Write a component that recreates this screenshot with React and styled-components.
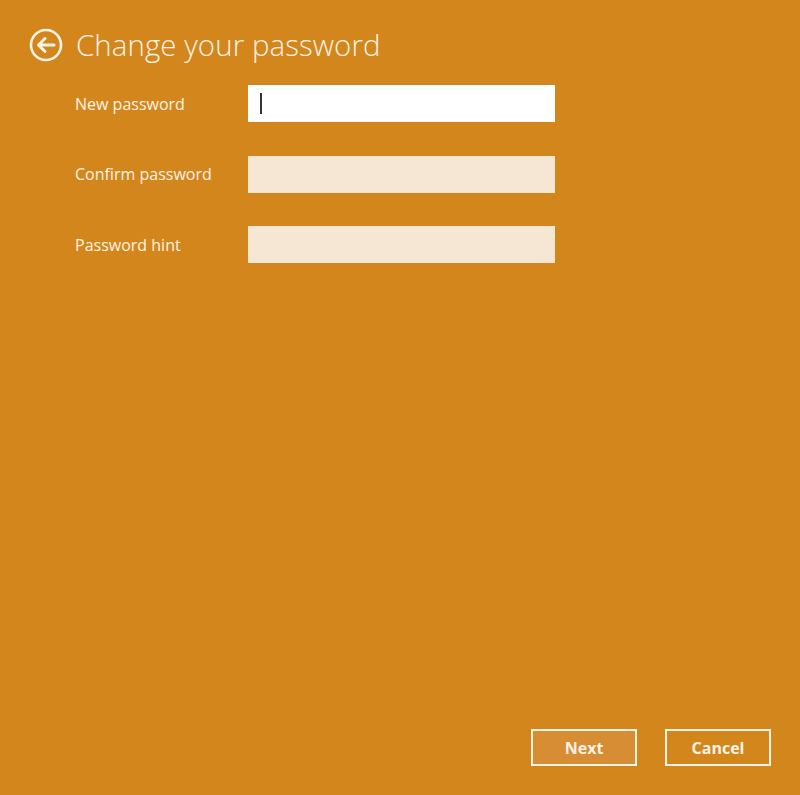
import React from "react";
import styled, { createGlobalStyle } from "styled-components";

const GlobalStyle = createGlobalStyle`
  html, body {
    margin: 0;
    padding: 0;
    background: #d3861c;
  }
  * {
    box-sizing: border-box;
  }
`;

const Page = styled.div`
  width: 800px;
  height: 795px;
  background: #d3861c;
  color: #fdf3e6;
  font-family: "Open Sans", "Noto Sans", sans-serif;
  display: flex;
  flex-direction: column;
`;

const Header = styled.div`
  display: flex;
  align-items: center;
  gap: 13px;
  padding: 27px 0 0 29px;
  height: 62px;
`;

const BackButton = styled.button`
  width: 34px;
  height: 34px;
  padding: 0;
  border: none;
  background: transparent;
  display: flex;
  align-items: center;
  justify-content: center;
`;

const Title = styled.h1`
  margin: 0;
  font-size: 29.4px;
  font-weight: 300;
  letter-spacing: 0.1px;
  color: #fdf3e6;
`;

const Form = styled.div`
  display: flex;
  flex-direction: column;
  gap: 33.5px;
  padding: 23px 0 0 75px;
`;

const Row = styled.div`
  display: flex;
  align-items: center;
`;

const Label = styled.label`
  width: 173px;
  font-size: 16px;
  color: #fdf3e6;
`;

const Field = styled.div`
  position: relative;
  width: 307px;
  height: 37px;
  background: ${(p) => (p.$active ? "#ffffff" : "#f6e6d4")};
`;

const Caret = styled.span`
  position: absolute;
  left: 12px;
  top: 8px;
  width: 1.5px;
  height: 21px;
  background: #333;
`;

const Spacer = styled.div`
  flex: 1;
`;

const Footer = styled.div`
  display: flex;
  justify-content: flex-end;
  gap: 28px;
  padding: 0 29px 29px 0;
`;

const Button = styled.button`
  width: 106px;
  height: 37px;
  border: 2px solid #fdf3e6;
  background: ${(p) => (p.$primary ? "#d68d33" : "transparent")};
  color: #fdf3e6;
  font-family: "Open Sans", "Noto Sans", sans-serif;
  font-size: 16px;
  font-weight: 700;
  padding: 0;
`;

const fields = [
  { label: "New password", active: true },
  { label: "Confirm password" },
  { label: "Password hint" },
];

const App = () => {
  return (
    <Page>
      <GlobalStyle />
      <Header>
        <BackButton>
          <svg width="34" height="34" viewBox="0 0 34 34" fill="none">
            <circle cx="17" cy="17" r="15" stroke="#fdf3e6" strokeWidth="2.6" />
            <path
              d="M25 17H10M16 10.5L9.5 17L16 23.5"
              stroke="#fdf3e6"
              strokeWidth="3"
              strokeLinecap="round"
              strokeLinejoin="round"
            />
          </svg>
        </BackButton>
        <Title>Change your password</Title>
      </Header>
      <Form>
        {fields.map((f) => (
          <Row key={f.label}>
            <Label>{f.label}</Label>
            <Field $active={f.active}>{f.active && <Caret />}</Field>
          </Row>
        ))}
      </Form>
      <Spacer />
      <Footer>
        <Button $primary>Next</Button>
        <Button>Cancel</Button>
      </Footer>
    </Page>
  );
};

export default App;
